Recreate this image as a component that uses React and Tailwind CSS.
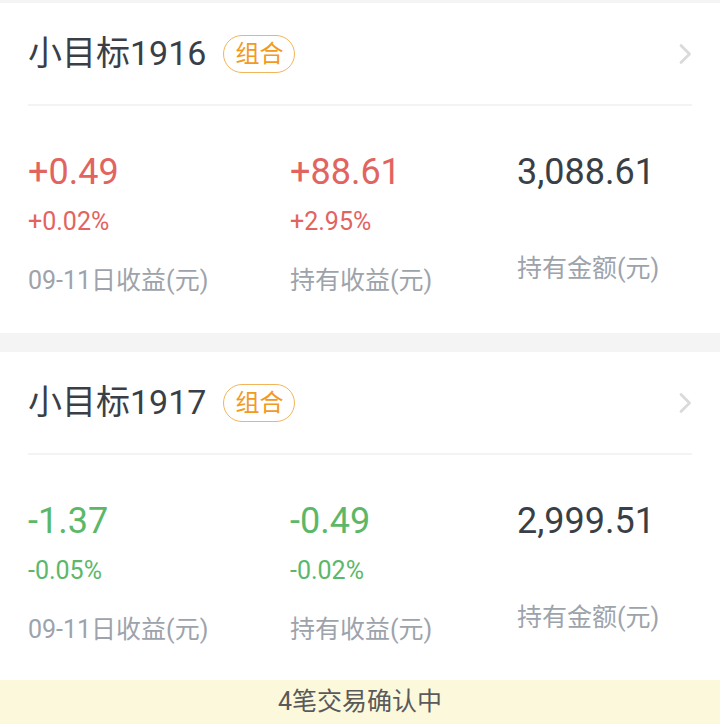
import React from 'react';

const accounts = [
  {
    name: '小目标1916',
    day: '+0.49',
    dayPct: '+0.02%',
    hold: '+88.61',
    holdPct: '+2.95%',
    amount: '3,088.61',
    up: true,
  },
  {
    name: '小目标1917',
    day: '-1.37',
    dayPct: '-0.05%',
    hold: '-0.49',
    holdPct: '-0.02%',
    amount: '2,999.51',
    up: false,
  },
];

function Chevron() {
  return (
    <svg width="16" height="22" viewBox="0 0 16 22" fill="none">
      <path d="M4 2.5l8.5 8.5-8.5 8.5" stroke="#dadada" strokeWidth="2.8" strokeLinecap="round" strokeLinejoin="round" />
    </svg>
  );
}

function Stat({ value, pct, label, color }) {
  return (
    <div className="flex flex-col">
      <div className={`text-[36px] leading-[36px] mt-[48px] ${color}`}>{value}</div>
      <div className={`text-[25px] leading-[28px] mt-[18px] ${color}`}>{pct}</div>
      <div className="text-[25px] leading-[30px] mt-[30px] text-[#9da3ab]">{label}</div>
    </div>
  );
}

function Card({ item, last }) {
  const color = item.up ? 'text-[#e2645f]' : 'text-[#5cb868]';
  return (
    <div className={`bg-white ${last ? 'pb-[35px]' : 'pb-[37px]'}`}>
      <div className="h-[101px] mx-[28px] flex items-center justify-between">
        <div className="flex items-center">
          <span className="text-[34px] text-[#3a3f47]">{item.name}</span>
          <span className="ml-[17px] h-[38px] px-[11px] flex items-center rounded-full border border-[#f2b55a] text-[24px] text-[#f29a1e]">
            组合
          </span>
        </div>
        <div className="mr-[-1px]">
          <Chevron />
        </div>
      </div>
      <div className="mx-[28px] h-[2px] bg-[#f3f3f3]" />
      <div className="flex px-[28px]">
        <div className="w-[262px]">
          <Stat value={item.day} pct={item.dayPct} label="09-11日收益(元)" color={color} />
        </div>
        <div className="w-[227px]">
          <Stat value={item.hold} pct={item.holdPct} label="持有收益(元)" color={color} />
        </div>
        <div className="flex-1 flex flex-col">
          <div className="text-[36px] leading-[36px] mt-[48px] text-[#3a3f47]">{item.amount}</div>
          <div className="text-[25px] leading-[30px] mt-[64px] text-[#9da3ab]">持有金额(元)</div>
        </div>
      </div>
    </div>
  );
}

export default function App() {
  return (
    <div
      className="w-[720px] h-[724px] overflow-hidden bg-[#f4f4f4] pt-[3px] flex flex-col"
      style={{ fontFamily: 'Roboto, "Noto Sans CJK SC", sans-serif' }}
    >
      <Card item={accounts[0]} />
      <div className="h-[20px]" />
      <Card item={accounts[1]} last />
      <div className="h-[45px] bg-[#fcf8dc] flex items-center justify-center text-[25px] text-[#5a5a5a]">
        4笔交易确认中
      </div>
    </div>
  );
}
